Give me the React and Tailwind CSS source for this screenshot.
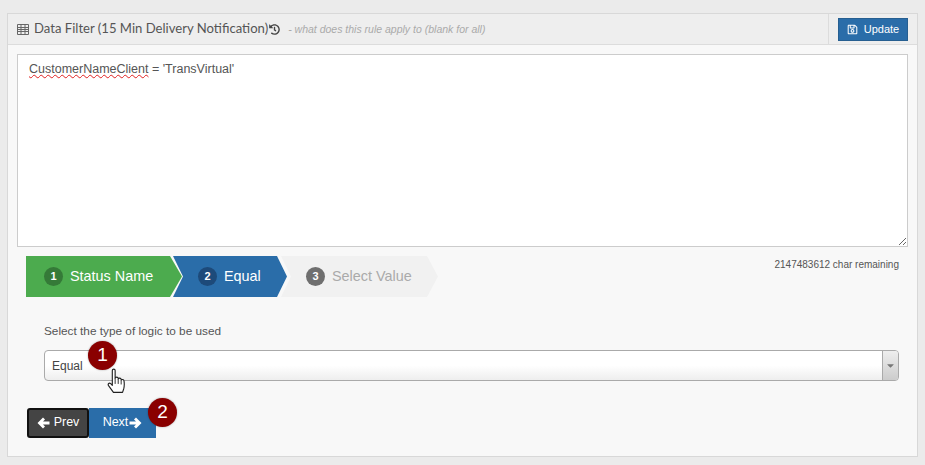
import { FaHistory, FaRegSave, FaCaretDown } from 'react-icons/fa';

const arial = 'font-["Liberation_Sans",Arial,sans-serif]';

function TableIcon() {
  return (
    <svg width="12" height="11" viewBox="0 0 12 11" className="shrink-0 text-[#666]">
      <path d="M.5.5h11v10H.5zM.5 3.5h11M.5 5.5h11M.5 7.5h11M4 .5v10M8 .5v10" fill="none" stroke="currentColor" strokeWidth="1" />
    </svg>
  );
}

function ArrowLeft({ className }) {
  return (
    <svg width="13" height="12" viewBox="0 0 13 12" className={className}>
      <path d="M6 .5 .5 6 6 11.500 8 9.500 6 7.600h6.500V4.400H6L8 2.500z" fill="currentColor" />
    </svg>
  );
}

function ArrowRight({ className }) {
  return (
    <svg width="13" height="12" viewBox="0 0 13 12" className={className}>
      <path d="M7 .5 12.500 6 7 11.500 5 9.500 7 7.600H.5V4.400H7L5 2.500z" fill="currentColor" />
    </svg>
  );
}

// hand cursor sitting over the select
function HandCursor({ className }) {
  return (
    <svg width="18" height="25" viewBox="0 0 15.500 22" className={className}>
      <path
        d="M4.500 2.200C4.500.6 7 .6 7 2.200V9c.3-1.300 2.500-1.300 2.700 0v.8c.3-1.200 2.400-1.200 2.600.2v.8c.4-1 2.300-.9 2.500.5 .3 2 .3 5 -.3 7.200l-1 3H5.500L1.200 15.500c-1-1.500.6-2.900 1.900-1.800l1.400 1.500z"
        fill="#fff"
        stroke="#222"
        strokeWidth="1"
        strokeLinejoin="round"
      />
      <path d="M7 9v5M9.700 10v4M12.300 11v3.500" fill="none" stroke="#222" strokeWidth="0.8" />
    </svg>
  );
}

function Step({ num, label, className, numClass, textClass }) {
  return (
    <div className={`flex h-[41px] items-center ${className}`}>
      <span className={`flex h-[19px] w-[19px] shrink-0 items-center justify-center rounded-full text-[11px] font-bold text-white ${numClass}`}>
        {num}
      </span>
      <span className={`ml-[7px] text-[14.4px] ${textClass}`}>{label}</span>
    </div>
  );
}

function Badge({ children, className }) {
  return (
    <div className={`absolute flex h-[29px] w-[29px] items-center justify-center rounded-full bg-[#8a0000] text-[19px] text-white shadow-[0_0_2px_rgba(0,0,0,0.35)] ${className}`}>
      {children}
    </div>
  );
}

export default function App() {
  return (
    <div className={`h-[465px] w-[925px] overflow-hidden bg-[#ebebeb] px-[7px] pt-[13px] ${arial}`}>
      <div className="h-[444px] w-[911px] border border-[#d8d8d8] bg-[#f8f8f8]">
        {/* Header */}
        <div className="flex h-[31px] items-stretch border-b border-[#dcdcdc] bg-[#eeeeee]">
          <div className="flex flex-1 items-center pl-[9px]">
            <TableIcon />
            <span className="ml-[5px] font-['Lato',sans-serif] text-[13.1px] leading-none text-[#555]">
              Data Filter (15 Min Delivery Notification)
            </span>
            <FaHistory className="ml-[1px] text-[11px] text-[#444]" />
            <span className="ml-[8px] mt-[2px] text-[10.5px] italic text-[#aaa]">
              - what does this rule apply to (blank for all)
            </span>
          </div>
          <div className="flex w-[89px] items-center justify-center border-l border-[#dcdcdc]">
            <button className="flex h-[23px] w-[70px] items-center justify-center border border-[#265f91] bg-[#2a6da9] text-[11px] text-white">
              <FaRegSave className="mr-[6px] text-[11px]" />
              Update
            </button>
          </div>
        </div>

        <div className="relative px-[9px] pt-[9px]">
          {/* Filter text */}
          <div className="h-[193px] w-[891px] resize overflow-auto border border-[#cccccc] bg-white px-[11px] py-[5px] text-[12.5px] text-[#555]">
            <span className="underline decoration-[#e02020] decoration-wavy decoration-1 underline-offset-1">CustomerNameClient</span>
            {" = 'TransVirtual'"}
          </div>

          {/* Wizard steps */}
          <div className="mt-[9px] flex items-start justify-between">
            <div className="ml-[9px] flex">
              <Step
                num="1"
                label="Status Name"
                className="w-[156px] bg-[#4cab4e] pl-[18px] [clip-path:polygon(0_0,144px_0,100%_50%,144px_100%,0_100%)]"
                numClass="bg-[#357a38]"
                textClass="text-white"
              />
              <Step
                num="2"
                label="Equal"
                className="ml-[-9px] w-[114px] bg-[#2a6da9] pl-[25px] [clip-path:polygon(0_0,104px_0,100%_50%,104px_100%,0_100%,10px_50%)]"
                numClass="bg-[#1d4a7a]"
                textClass="text-white"
              />
              <Step
                num="3"
                label="Select Value"
                className="ml-[-6px] w-[157px] bg-[#f1f1f1] pl-[25px] [clip-path:polygon(0_0,146px_0,100%_50%,146px_100%,0_100%,10px_50%)]"
                numClass="bg-[#6f6f6f]"
                textClass="text-[#aaaaaa]"
              />
            </div>
            <div className="mr-[9px] mt-[1px] text-[10px] text-[#555]">2147483612 char remaining</div>
          </div>

          {/* Logic select */}
          <div className="ml-[27px] mt-[26px] text-[11.8px] text-[#555]">Select the type of logic to be used</div>
          <div className="ml-[27px] mt-[9px] flex h-[31px] w-[855px] items-stretch rounded-[4px] border border-[#aaaaaa] bg-gradient-to-b from-white from-50% to-[#eeeeee] text-[12px] text-[#444]">
            <div className="flex flex-1 items-center pl-[7px] pt-[1px]">Equal</div>
            <div className="flex w-[16px] items-center justify-center rounded-r-[3px] border-l border-[#aaaaaa] bg-gradient-to-b from-[#eeeeee] to-[#cccccc]">
              <FaCaretDown className="text-[11px] text-[#777]" />
            </div>
          </div>

          {/* Nav buttons */}
          <div className="ml-[10px] mt-[27px] flex h-[30px]">
            <button className="flex w-[62px] items-center justify-center rounded-[3px] border-2 border-[#111] bg-[#444444] text-[12.5px] text-white">
              <ArrowLeft className="mr-[4px]" />
              Prev
            </button>
            <button className="flex w-[67px] items-center justify-center bg-[#2a6da9] text-[12.5px] text-white">
              Next
              <ArrowRight className="ml-[1px]" />
            </button>
          </div>

          {/* Callouts */}
          <Badge className="left-[80px] top-[296px]">1</Badge>
          <Badge className="left-[140px] top-[353px]">2</Badge>
          <HandCursor className="absolute left-[99px] top-[323px]" />
        </div>
      </div>
    </div>
  );
}
